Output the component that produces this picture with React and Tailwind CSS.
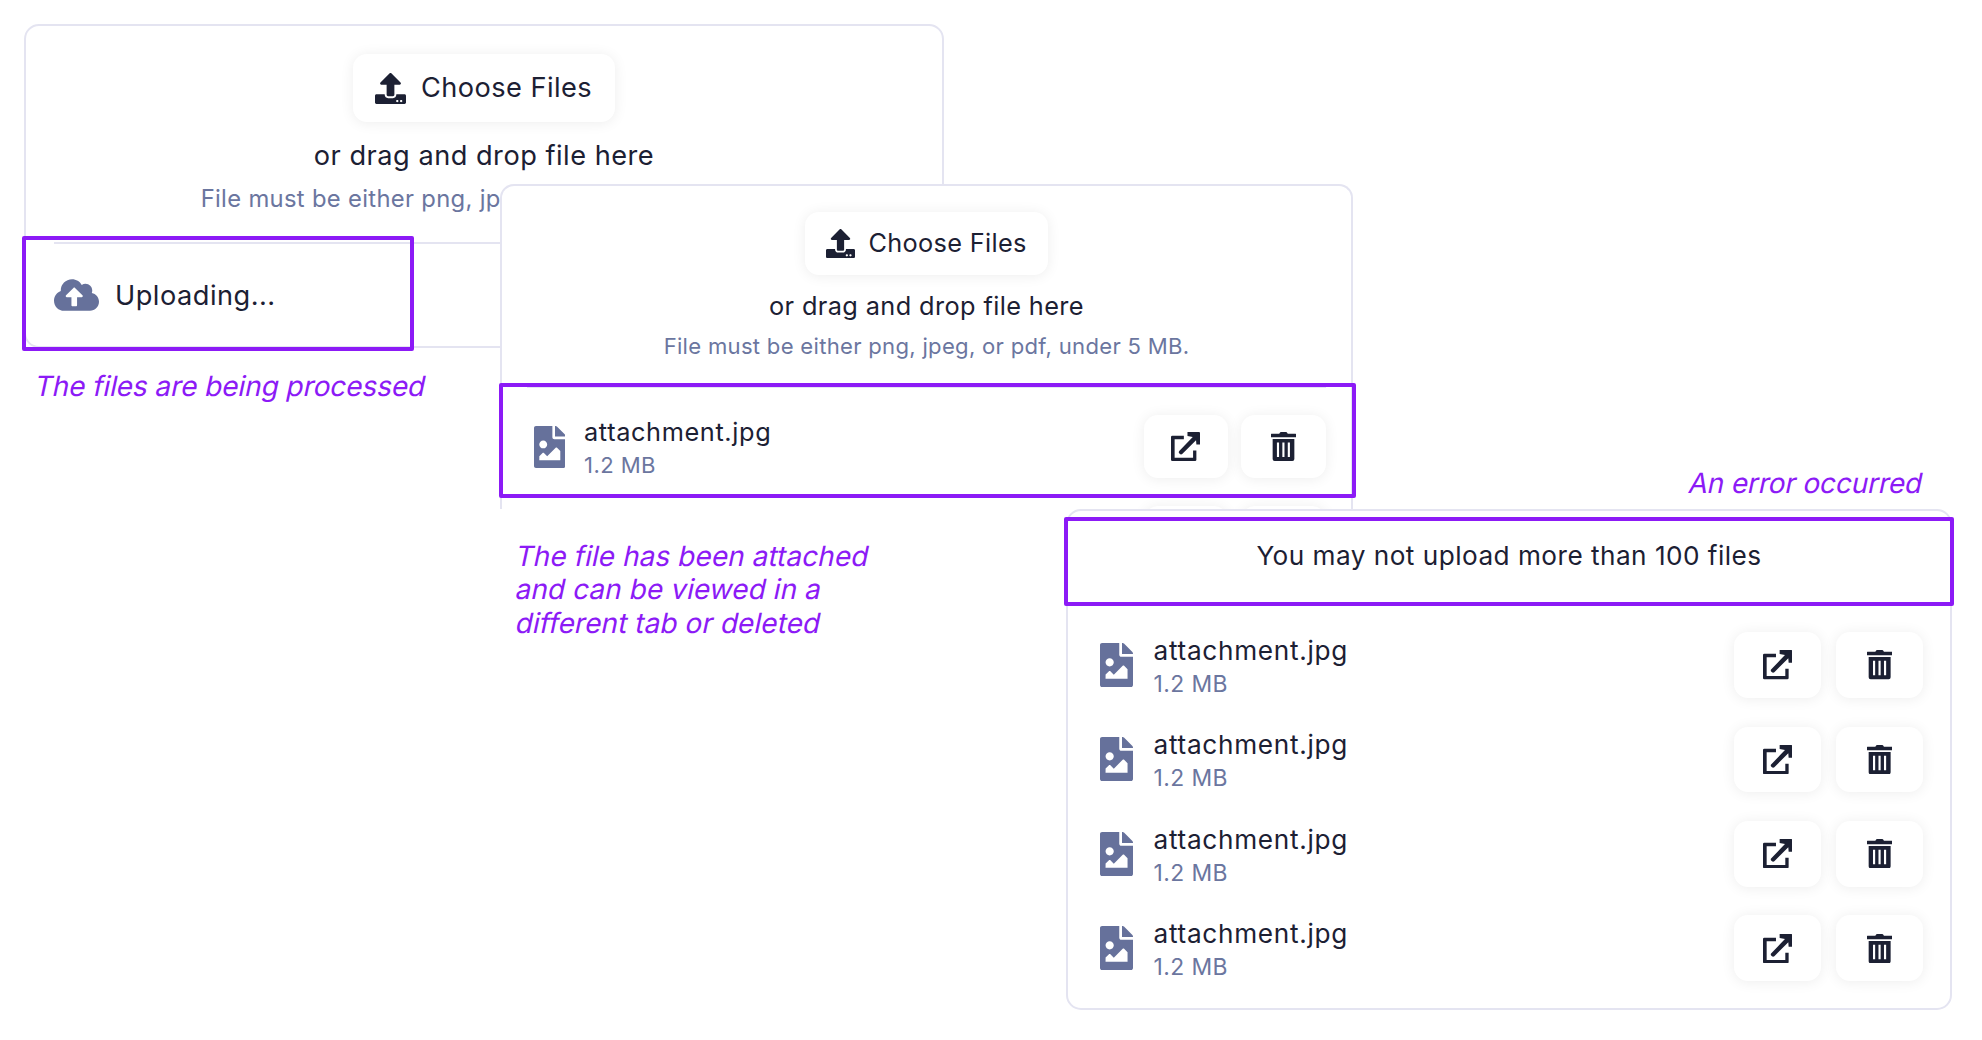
import React from 'react';
import { FaUpload, FaFileImage, FaCloudUploadAlt } from 'react-icons/fa';

function ExternalLinkIcon({ className }) {
  return (
    <svg viewBox="0 0 88 88" className={className} fill="currentColor" aria-hidden="true">
      <path d="M4 11H39V22H11V78H67V56H77V84Q77 88 73 88H4Q0 88 0 84V15Q0 11 4 11Z" />
      <path d="M50 0H85Q88 0 88 3V38H77L76 25L34 67Q30 70 26 66Q21 62 25 58L66 15L50 12Z" />
    </svg>
  );
}

function TrashIcon({ className }) {
  return (
    <svg viewBox="0 0 76 88" className={className} fill="currentColor" aria-hidden="true">
      <path d="M1 5H25L28 1Q29 0 31 0H45Q47 0 48 1L51 5H75Q76 5 76 7V16H0V7Q0 5 1 5Z" />
      <path
        fillRule="evenodd"
        d="M5 21H71V82Q71 88 65 88H11Q5 88 5 82ZM18 32V76H24.5V32ZM34.5 32V76H41V32ZM51 32V76H57.5V32Z"
      />
    </svg>
  );
}

const card = 'absolute border-2 border-[#e4e4f1] bg-white';
const softButton = 'flex items-center bg-white shadow-[0_1px_14px_rgba(0,0,0,0.075)] rounded-[14px]';

const sizes = {
  medium: {
    row: 'flex h-[63px] shrink-0 items-center',
    file: 'h-[42px] w-[31.5px] shrink-0',
    text: 'ml-[19px] flex-1 pt-[5.5px]',
    name: 'text-[25.3px] leading-[32px] tracking-[0.025em]',
    weight: 'text-[22.1px] leading-[34px] tracking-[0.018em] text-[#6b769f]',
    actions: 'flex gap-[13px]',
    button: 'h-[63px] w-[84.4px] justify-center',
    link: 'h-[29px] w-[29px]',
    trash: 'h-[29px] w-[25px]',
  },
  large: {
    row: 'flex h-[65.5px] shrink-0 items-center',
    file: 'h-[44px] w-[33px] shrink-0',
    text: 'ml-[20.5px] flex-1 pt-[3.5px]',
    name: 'text-[26.2px] leading-[34px] tracking-[0.027em]',
    weight: 'text-[22.9px] leading-[32px] tracking-[0.018em] text-[#6b769f]',
    actions: 'flex gap-[15px]',
    button: 'h-[65.5px] w-[87px] justify-center',
    link: 'h-[29.3px] w-[29.3px]',
    trash: 'h-[29.3px] w-[25.3px]',
  },
};

function Actions({ size }) {
  const s = sizes[size];
  return (
    <div className={s.actions}>
      <button className={`${softButton} ${s.button}`} aria-label="Open in new tab">
        <ExternalLinkIcon className={s.link} />
      </button>
      <button className={`${softButton} ${s.button}`} aria-label="Delete">
        <TrashIcon className={s.trash} />
      </button>
    </div>
  );
}

function FileRow({ size }) {
  const s = sizes[size];
  return (
    <li className={s.row}>
      <FaFileImage className={`${s.file} text-[#66719b]`} />
      <div className={s.text}>
        <div className={s.name}>attachment.jpg</div>
        <div className={s.weight}>1.2 MB</div>
      </div>
      <Actions size={size} />
    </li>
  );
}

const HINT = 'File must be either png, jpeg, or pdf, under 5 MB.';

function UploadingCard() {
  return (
    <section className={`${card} left-[24px] top-[24px] h-[324px] w-[920px] rounded-[15px]`}>
      <div className="mx-[28px] flex h-[218px] flex-col items-center border-b-2 border-[#e4e4f1] pt-[28px]">
        <button className={`${softButton} h-[68px] w-[262px] shrink-0 pl-[22px]`}>
          <FaUpload className="h-[31px] w-[31px]" />
          <span className="ml-[15px] whitespace-nowrap pt-[1px] text-[27.2px] tracking-[0.016em]">Choose Files</span>
        </button>
        <p className="mt-[18px] text-[27.2px] leading-[32px] tracking-[0.018em]">or drag and drop file here</p>
        <p className="mt-[11px] whitespace-nowrap text-[23.8px] leading-[32px] tracking-[0.0134em] text-[#6b769f]">{HINT}</p>
      </div>
      <div className="flex h-[102px] items-center pl-[28px]">
        <FaCloudUploadAlt className="h-[36px] w-[45px] text-[#66719b]" />
        <span className="ml-[16px] pt-[2px] text-[27.2px] tracking-[0.018em]">Uploading...</span>
      </div>
    </section>
  );
}

function AttachedCard() {
  return (
    <section className={`${card} left-[500px] top-[184px] h-[325px] w-[853px] overflow-hidden rounded-t-[14px] border-b-0`}>
      <div className="mx-[25px] flex h-[202px] flex-col items-center border-b-2 border-[#e4e4f1] pt-[26px]">
        <button className={`${softButton} h-[63px] w-[243px] shrink-0 pl-[21px]`}>
          <FaUpload className="h-[29px] w-[29px]" />
          <span className="ml-[13.5px] whitespace-nowrap pb-[1px] text-[25.3px] tracking-[0.013em]">Choose Files</span>
        </button>
        <p className="mt-[15.5px] text-[25.3px] leading-[30px] tracking-[0.0155em]">or drag and drop file here</p>
        <p className="mt-[10.5px] whitespace-nowrap text-[22.1px] leading-[30px] tracking-[0.013em] text-[#6b769f]">{HINT}</p>
      </div>
      <ul className="flex flex-col gap-[27.7px] pt-[27px] pl-[31.5px] pr-[25.5px]">
        <FileRow size="medium" />
        <li className="flex justify-end">
          <Actions size="medium" />
        </li>
      </ul>
    </section>
  );
}

function ErrorCard() {
  return (
    <section className={`${card} left-[1066px] top-[509px] h-[501px] w-[886px] rounded-[15px]`}>
      <div className="mx-[27px] flex h-[94px] items-center justify-center border-b-2 border-[#e4e4f1] pb-[2px]">
        <p className="whitespace-nowrap text-[26.2px] tracking-[0.0178em]">You may not upload more than 100 files</p>
      </div>
      <ul className="flex flex-col gap-[28.9px] pt-[27.3px] pl-[32px] pr-[27px]">
        <FileRow size="large" />
        <FileRow size="large" />
        <FileRow size="large" />
        <FileRow size="large" />
      </ul>
    </section>
  );
}

function Caption({ className, lines }) {
  return (
    <div className={`absolute whitespace-nowrap text-[28px] leading-[33.6px] text-[#8c1af6] ${className}`}>
      {lines.map((line) => (
        <p key={line} className="origin-[0%_80%] -skew-x-12">
          {line}
        </p>
      ))}
    </div>
  );
}

const highlight = 'pointer-events-none absolute rounded-[2px] border-4 border-[#8c1af6]';

export default function App() {
  return (
    <main className="relative h-[1040px] w-[1982px] overflow-hidden bg-white font-['Inter',sans-serif] text-[#1c2033]">
      <UploadingCard />
      <AttachedCard />
      <ErrorCard />

      <div className={`${highlight} left-[21.5px] top-[236px] h-[114.5px] w-[392.5px]`} />
      <div className={`${highlight} left-[499px] top-[383px] h-[115px] w-[856.5px]`} />
      <div className={`${highlight} left-[1064px] top-[517px] h-[89px] w-[890px]`} />

      <Caption className="left-[32.5px] top-[370px] tracking-[-0.003em]" lines={['The files are being processed']} />
      <Caption
        className="left-[513.5px] top-[539.5px] tracking-[0.002em]"
        lines={['The file has been attached', 'and can be viewed in a', 'different tab or deleted']}
      />
      <Caption className="left-[1687px] top-[467px] tracking-[-0.006em]" lines={['An error occurred']} />
    </main>
  );
}
